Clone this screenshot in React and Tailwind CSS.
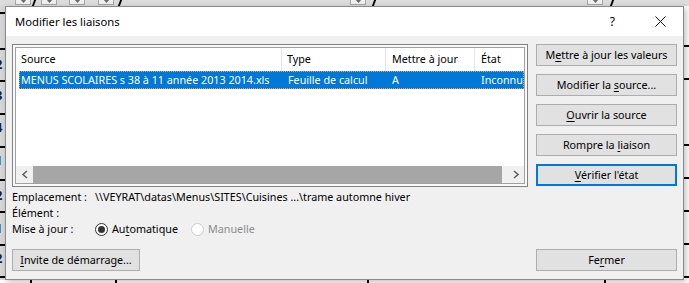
import React from "react";

const U = ({ children }) => (
  <span className="underline decoration-1 underline-offset-[2px]">{children}</span>
);

function Btn({ children, focused = false, className = "" }) {
  return (
    <div
      className={
        "h-[22px] flex items-center justify-center bg-[#e1e1e1] text-black whitespace-nowrap " +
        (focused ? "border-2 border-[#0078d7] " : "border border-[#adadad] ") +
        className
      }
    >
      <span className="whitespace-pre">{children}</span>
    </div>
  );
}

function Radio({ checked = false, disabled = false }) {
  return (
    <span
      className={
        "w-[13px] h-[13px] rounded-full flex items-center justify-center bg-white border " +
        (disabled ? "border-[#cccccc]" : "border-[#333333]")
      }
    >
      {checked ? <span className="w-[7px] h-[7px] rounded-full bg-[#333333]" /> : null}
    </span>
  );
}

const Chevron = ({ dir }) => (
  <svg width="8" height="9" viewBox="0 0 8 9">
    <path
      d={dir === "left" ? "M6 1 L2 4.5 L6 8" : "M2 1 L6 4.5 L2 8"}
      fill="none"
      stroke="#606060"
      strokeWidth="1.6"
    />
  </svg>
);

function Background() {
  const boxes = [15, 41, 69, 98, 350, 587];
  const slashes = [33, 119, 373, 611];
  const leftLines = [12, 48, 80, 113, 146, 179, 211, 244, 276];
  const leftDigits = [
    [57, "2"],
    [88, "3"],
    [120, "4"],
    [153, "1"],
    [188, "2"],
    [221, "1"],
    [251, "2"],
  ];
  const rightLines = [45, 78, 144, 177, 210, 243, 276];
  const bottomMarks = [30, 115, 367, 604];
  return (
    <>
      {/* top header strip */}
      <div className="absolute left-0 top-0 w-[689px] h-[6px] bg-[#dcdcdc]" />
      {boxes.map((x) => (
        <div
          key={"b" + x}
          className="absolute top-[-8px] w-[16px] h-[13px] bg-[#f0f0f0] border border-[#a6a6a6] flex items-end justify-center"
          style={{ left: x }}
        >
          <svg width="7" height="4" viewBox="0 0 7 4" className="mb-[1px]">
            <path d="M0 0 L7 0 L3.5 4 Z" fill="#6a6a6a" />
          </svg>
        </div>
      ))}
      {slashes.map((x) => (
        <div
          key={"s" + x}
          className="absolute top-0 w-[2px] h-[6px] bg-black skew-x-[-20deg]"
          style={{ left: x }}
        />
      ))}
      {/* left row-number strip */}
      <div className="absolute left-0 top-[6px] w-[5px] h-[277px] bg-[#d6d6d6] overflow-hidden">
        {leftLines.map((y) => (
          <div key={"l" + y} className="absolute left-0 w-[5px] h-[2px] bg-black" style={{ top: y - 6 }} />
        ))}
        {leftDigits.map(([y, d]) => (
          <span
            key={"d" + y}
            className="absolute left-[-5px] text-[13px] leading-[14px] font-bold text-[#222]"
            style={{ top: y - 6 }}
          >
            {d}
          </span>
        ))}
      </div>
      {/* right strip */}
      <div className="absolute left-[684px] top-[6px] w-[5px] h-[277px] bg-white">
        {rightLines.map((y) => (
          <div key={"r" + y} className="absolute left-0 w-[5px] h-[2px] bg-black" style={{ top: y - 6 }} />
        ))}
      </div>
      {/* bottom strip */}
      <div className="absolute left-0 top-[280px] w-[689px] h-[3px] bg-white">
        {bottomMarks.map((x) => (
          <div key={"m" + x} className="absolute top-0 w-[2px] h-[3px] bg-black" style={{ left: x }} />
        ))}
      </div>
    </>
  );
}

export default function App() {
  return (
    <div
      className="relative w-[689px] h-[283px] overflow-hidden bg-white text-[10.75px] text-black"
      style={{ fontFamily: '"Noto Sans", "Segoe UI", sans-serif' }}
    >
      <Background />

      {/* dialog */}
      <div className="absolute left-[5px] top-[6px] w-[679px] h-[274px] border border-[#8a8a8a] bg-[#f0f0f0] flex flex-col shadow-[2px_2px_6px_rgba(0,0,0,0.25)]">
        {/* title bar */}
        <div className="h-[29px] bg-white flex items-center pl-[9px] shrink-0">
          <span className="text-[11.25px] leading-none">Modifier les liaisons</span>
          <span className="ml-auto mr-[40px] text-[12px] leading-none">?</span>
          <svg width="11" height="11" viewBox="0 0 11 11" className="mr-[17px]">
            <path d="M0.5 0.5 L10.5 10.5 M10.5 0.5 L0.5 10.5" stroke="#111" strokeWidth="1" />
          </svg>
        </div>

        {/* body */}
        <div className="flex-1 flex flex-col pl-[6px] pr-[6px] pt-[8px]">
          <div className="flex gap-[8px]">
            {/* list box */}
            <div className="w-[516px] h-[143px] border border-[#828282] bg-[#f9f9f9] p-[2px] shrink-0">
              <div className="w-full h-full border border-[#a0a0a0] bg-white flex flex-col overflow-hidden">
                {/* header */}
                <div className="h-[23px] flex shrink-0">
                  <div className="w-[266px] pl-[5px] flex items-center border-r border-[#e5e5e5]">Source</div>
                  <div className="w-[104px] pl-[5px] flex items-center border-r border-[#e5e5e5]">Type</div>
                  <div className="w-[89px] pl-[6px] flex items-center border-r border-[#e5e5e5]">Mettre à jour</div>
                  <div className="flex-1 pl-[6px] flex items-center">État</div>
                </div>
                {/* selected row */}
                <div className="h-[18px] ml-[3px] flex bg-[#0078d7] text-white outline outline-1 outline-dotted outline-[#e8a060] -outline-offset-1 whitespace-nowrap shrink-0">
                  <div className="w-[263px] pl-[2px] flex items-center">MENUS SCOLAIRES s 38 à 11 année 2013 2014.xls</div>
                  <div className="w-[104px] pl-[6px] flex items-center">Feuille de calcul</div>
                  <div className="w-[89px] pl-[6px] flex items-center">A</div>
                  <div className="flex-1 pl-[6px] flex items-center overflow-hidden">Inconnu</div>
                </div>
                <div className="flex-1" />
                {/* horizontal scrollbar */}
                <div className="h-[17px] flex bg-[#f0f0f0] shrink-0">
                  <div className="w-[17px] flex items-center justify-center">
                    <Chevron dir="left" />
                  </div>
                  <div className="w-[469px] bg-[#a6a6a6]" />
                  <div className="flex-1" />
                  <div className="w-[17px] flex items-center justify-center">
                    <Chevron dir="right" />
                  </div>
                </div>
              </div>
            </div>

            {/* right buttons */}
            <div className="w-[141px] flex flex-col gap-[8px]">
              <Btn>
                M<U>e</U>ttre à jour les valeurs
              </Btn>
              <Btn>
                Modifier la <U>s</U>ource...
              </Btn>
              <Btn>
                <U>O</U>uvrir la source
              </Btn>
              <Btn>
                Rompre la <U>l</U>iaison
              </Btn>
              <Btn focused>
                <U>V</U>érifier l'état
              </Btn>
            </div>
          </div>

          {/* info lines */}
          <div className="mt-[2px] flex flex-col">
            <div className="h-[16px] flex items-center whitespace-nowrap">
              <span className="w-[83px]">Emplacement :</span>
              <span>\\VEYRAT\datas\Menus\SITES\Cuisines ...\trame automne hiver</span>
            </div>
            <div className="h-[16px] flex items-center">
              <span className="w-[83px]">Élément :</span>
            </div>
            <div className="h-[17px] flex items-center">
              <span className="w-[83px]">Mise à jour :</span>
              <span className="w-[96px] flex items-center gap-[4px]">
                <Radio checked />
                <span>
                  Au<U>t</U>omatique
                </span>
              </span>
              <span className="flex items-center gap-[4px] text-[#8d8d8d]">
                <Radio disabled />
                <span>Manuelle</span>
              </span>
            </div>
          </div>

          {/* bottom row */}
          <div className="mt-[11px] flex justify-between">
            <Btn className="w-[128px]">
              <U>I</U>nvite de démarrage...
            </Btn>
            <Btn className="w-[141px]">
              Fe<U>r</U>mer
            </Btn>
          </div>
        </div>
      </div>
    </div>
  );
}
